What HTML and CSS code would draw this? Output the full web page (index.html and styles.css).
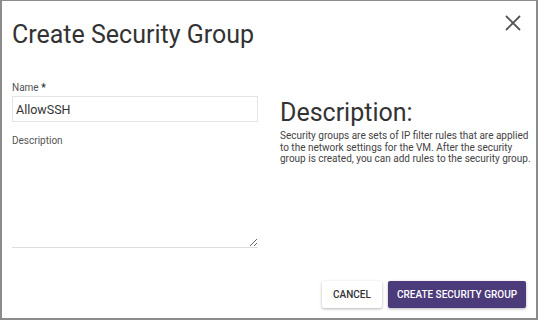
FILE: index.html
```html
<!DOCTYPE html>
<html lang="en">
<head>
  <meta charset="UTF-8" />
  <meta name="viewport" content="width=device-width, initial-scale=1.0"/>
  <title>Create Security Group</title>
  <link rel="stylesheet" href="styles.css">
</head>
<body>
  <div class="dialog">
    <div class="dialog-header">
      <h1>Create Security Group</h1>
      <button class="btn-close" aria-label="Close">
        <svg width="16" height="16" viewBox="0 0 16 16">
          <path d="M1 1 L15 15 M15 1 L1 15" stroke="#555" stroke-width="1.8" fill="none"/>
        </svg>
      </button>
    </div>

    <div class="dialog-body">
      <form class="form-col">
        <label for="nombre">Name <span class="req">*</span></label>
        <input type="text" id="nombre" value="AllowSSH">
        <label for="desc">Description</label>
        <textarea id="desc"></textarea>
      </form>

      <div class="info-col">
        <h2>Description:</h2>
        <p>Security groups are sets of IP filter rules that are applied to the network settings for the VM. After the security group is created, you can add rules to the security group.</p>
      </div>
    </div>

    <div class="dialog-footer">
      <button class="btn-cancel">Cancel</button>
      <button class="btn-primary">Create Security Group</button>
    </div>
  </div>
</body>
</html>
```

FILE: styles.css
```css
* { box-sizing: border-box; }

body {
  margin: 0;
  font-family: Roboto, "Liberation Sans", sans-serif;
  color: #333;
  background-color: #fff;
}

.dialog {
  width: 538px;
  height: 320px;
  border: 2px solid #8c8c8c;
  border-top-width: 1px;
  background-color: #fff;
  display: flex;
  flex-direction: column;
  padding: 0 0 0 10px;
}

.dialog-header {
  display: flex;
  justify-content: space-between;
  align-items: flex-start;
  height: 74px;
}

h1 {
  font-size: 25px;
  font-weight: 400;
  margin: 19px 0 0 0;
  color: #333;
}

.btn-close {
  background: none;
  border: none;
  padding: 0;
  margin: 14px 15px 0 0;
  cursor: pointer;
  width: 16px;
  height: 16px;
}

.btn-close svg { display: block; }

.dialog-body {
  display: flex;
  gap: 22px;
  flex: 1;
}

.form-col {
  width: 246px;
  flex-shrink: 0;
  display: flex;
  flex-direction: column;
}

label {
  font-size: 10px;
  color: #555;
  margin: 7px 0 3px 0;
}

.req { font-weight: bold; color: #333; }

input, textarea {
  font-family: inherit;
  color: #333;
  outline: none;
}

input {
  height: 26px;
  border: 1px solid #e4e4e4;
  padding: 0 3px;
  font-size: 12.5px;
  margin-bottom: 6px;
}

textarea {
  height: 99px;
  border: none;
  border-bottom: 1px solid #ddd;
  resize: vertical;
  padding: 2px 3px;
}

.info-col {
  width: 256px;
  flex-shrink: 0;
}

h2 {
  font-size: 25px;
  font-weight: 400;
  margin: 23px 0 3px 0;
  color: #333;
}

.info-col p {
  font-size: 10px;
  line-height: 11.5px;
  margin: 0;
  color: #444;
}

.dialog-footer {
  display: flex;
  justify-content: flex-end;
  gap: 6px;
  padding: 0 10px 10px 0;
}

.btn-cancel, .btn-primary {
  font-family: inherit;
  font-size: 10px;
  font-weight: 500;
  text-transform: uppercase;
  height: 27px;
  border: none;
  border-radius: 2px;
  cursor: pointer;
}

.btn-cancel {
  background-color: #fff;
  color: #333;
  width: 60px;
  box-shadow: 0 1px 3px rgba(0, 0, 0, 0.3);
}

.btn-primary {
  background-color: #4b3b7a;
  color: #fff;
  width: 138px;
  box-shadow: 0 1px 3px rgba(0, 0, 0, 0.3);
}
```
